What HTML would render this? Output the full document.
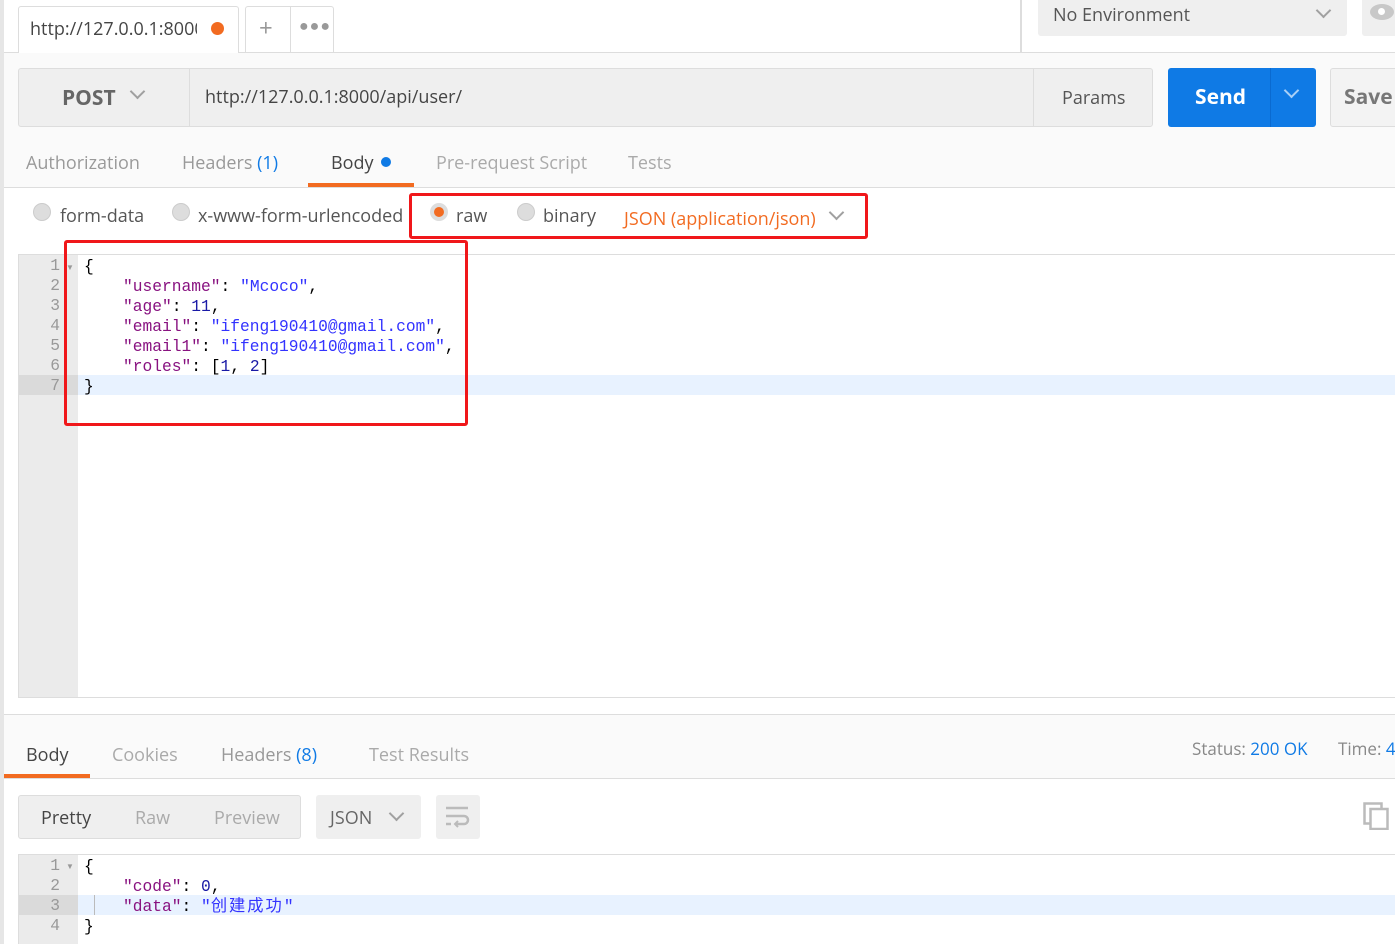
<!DOCTYPE html>
<html><head><meta charset="utf-8"><style>
*{margin:0;padding:0;box-sizing:border-box}
body{width:1395px;height:944px;overflow:hidden;background:#fff;font-family:"Open Sans","Liberation Sans",sans-serif;color:#505050;position:relative}
.a{position:absolute}
.t{font-size:18px;white-space:nowrap}
.mono{font-family:"Liberation Mono","Noto Sans CJK SC",monospace;font-size:16.25px;white-space:pre;line-height:20px}
.k{color:#881280}.s{color:#3333ff}.n{color:#1a1aa6}
.chev{display:inline-block;width:11px;height:11px;border-right:2px solid #a0a0a0;border-bottom:2px solid #a0a0a0;transform:rotate(45deg)}
.radio{width:18px;height:18px;border-radius:50%;background:#ddd;border:1px solid #ccc}
</style></head><body>
<div class="a" style="left:0;top:0;width:4px;height:944px;background:#e6e6e6"></div>
<div class="a" style="left:4px;top:52px;width:1391px;height:1px;background:#ddd"></div>
<div class="a" style="left:18px;top:6px;width:221px;height:47px;background:#fff;border:1px solid #ddd;border-bottom:none;border-radius:3px 3px 0 0"></div>
<div class="a t" style="left:30px;top:17px;width:167px;overflow:hidden;color:#444">http://127.0.0.1:8000</div>
<div class="a" style="left:211px;top:22px;width:13px;height:13px;border-radius:50%;background:#f26b21"></div>
<div class="a" style="left:245px;top:6px;width:89px;height:46px;border:1px solid #ddd;border-bottom:none;border-radius:3px 3px 0 0"></div>
<div class="a" style="left:290px;top:6px;width:1px;height:46px;background:#ddd"></div>
<div class="a" style="left:259px;top:11px;font-size:24px;color:#999">+</div>
<div class="a" style="left:299px;top:14px;font-size:16px;color:#999;letter-spacing:1px">●●●</div>
<div class="a" style="left:1020px;top:0;width:2px;height:52px;background:#ddd"></div>
<div class="a" style="left:1038px;top:0;width:309px;height:36px;background:#efefef;border-radius:0 0 3px 3px"></div>
<div class="a t" style="left:1053px;top:3px;color:#555">No Environment</div>
<div class="a chev" style="left:1318px;top:5px"></div>
<div class="a" style="left:1362px;top:0;width:40px;height:36px;background:#efefef;border-radius:0 0 3px 3px"></div>
<div class="a" style="left:1370px;top:4px;width:24px;height:16px;border-radius:50%;background:#c8c8c8"></div>
<div class="a" style="left:1376px;top:6px;width:11px;height:11px;border-radius:50%;background:#fff;border:2px solid #c8c8c8"></div>
<div class="a" style="left:4px;top:53px;width:1391px;height:135px;background:#fafafa"></div>
<div class="a" style="left:4px;top:187px;width:1391px;height:1px;background:#ddd"></div>
<div class="a" style="left:18px;top:68px;width:1135px;height:59px;background:#efefef;border:1px solid #ddd;border-radius:3px"></div>
<div class="a" style="left:189px;top:68px;width:1px;height:59px;background:#ddd"></div>
<div class="a" style="left:1033px;top:68px;width:1px;height:59px;background:#ddd"></div>
<div class="a" style="left:62px;top:84px;font-size:21px;font-weight:bold;color:#666">POST</div>
<div class="a chev" style="left:132px;top:86px"></div>
<div class="a t" style="left:205px;top:85px;color:#444">http://127.0.0.1:8000/api/user/</div>
<div class="a t" style="left:1062px;top:86px;color:#555">Params</div>
<div class="a" style="left:1168px;top:68px;width:148px;height:59px;background:#0f7ae5;border-radius:3px"></div>
<div class="a" style="left:1270px;top:68px;width:1px;height:59px;background:#0a6ad0"></div>
<div class="a" style="left:1195px;top:83px;font-size:21px;font-weight:bold;color:#fff">Send</div>
<div class="a" style="left:1286px;top:85px;width:11px;height:11px;border-right:2px solid #a9d0f7;border-bottom:2px solid #a9d0f7;transform:rotate(45deg)"></div>
<div class="a" style="left:1330px;top:68px;width:80px;height:59px;background:#f3f3f3;border:1px solid #ddd;border-radius:3px"></div>
<div class="a" style="left:1344px;top:83px;font-size:21px;font-weight:bold;color:#777">Save</div>
<div class="a t" style="left:26px;top:151px;color:#999">Authorization</div>
<div class="a t" style="left:182px;top:151px;color:#999">Headers <span style="color:#0f7ae5">(1)</span></div>
<div class="a t" style="left:331px;top:151px;color:#444">Body</div>
<div class="a" style="left:381px;top:157px;width:10px;height:10px;border-radius:50%;background:#0f7ae5"></div>
<div class="a" style="left:308px;top:183px;width:106px;height:4px;background:#f26b21"></div>
<div class="a t" style="left:436px;top:151px;color:#aaa">Pre-request Script</div>
<div class="a t" style="left:628px;top:151px;color:#aaa">Tests</div>
<div class="a radio" style="left:33px;top:203px"></div>
<div class="a t" style="left:60px;top:204px;color:#555">form-data</div>
<div class="a radio" style="left:172px;top:203px"></div>
<div class="a t" style="left:198px;top:204px;color:#555">x-www-form-urlencoded</div>
<div class="a radio" style="left:430px;top:203px;background:#f26b21;border:4px solid #ddd"></div>
<div class="a t" style="left:456px;top:204px;color:#555">raw</div>
<div class="a radio" style="left:517px;top:203px"></div>
<div class="a t" style="left:543px;top:204px;color:#555">binary</div>
<div class="a t" style="left:624px;top:207px;color:#f26b21">JSON (application/json)</div>
<div class="a chev" style="left:831px;top:207px"></div>
<div class="a" style="left:409px;top:193px;width:459px;height:46px;border:3px solid #f0171a;border-radius:3px"></div>
<div class="a" style="left:18px;top:254px;width:1377px;height:444px;border:1px solid #ddd;border-right:none"></div>
<div class="a" style="left:19px;top:255px;width:59px;height:442px;background:#ebebeb"></div>
<div class="a" style="left:19px;top:375px;width:59px;height:20px;background:#dadada"></div>
<div class="a" style="left:78px;top:375px;width:1317px;height:20px;background:#e8f2ff"></div>
<div class="a mono" style="left:40px;top:256px;color:#999;text-align:right;width:20px">1
2
3
4
5
6
7</div>
<div class="a" style="left:66px;top:262px;font-size:8px;color:#999">▼</div>
<div class="a mono" style="left:84px;top:257px;color:#000">{
    <span class="k">"username"</span>: <span class="s">"Mcoco"</span>,
    <span class="k">"age"</span>: <span class="n">11</span>,
    <span class="k">"email"</span>: <span class="s">"ifeng190410@gmail.com"</span>,
    <span class="k">"email1"</span>: <span class="s">"ifeng190410@gmail.com"</span>,
    <span class="k">"roles"</span>: [<span class="n">1</span>, <span class="n">2</span>]
}</div>
<div class="a" style="left:64px;top:240px;width:404px;height:186px;border:3px solid #f0171a;border-radius:3px"></div>
<div class="a" style="left:4px;top:714px;width:1391px;height:1px;background:#ddd"></div>
<div class="a" style="left:4px;top:715px;width:1391px;height:64px;background:#fafafa"></div>
<div class="a" style="left:4px;top:778px;width:1391px;height:1px;background:#ddd"></div>
<div class="a t" style="left:26px;top:743px;color:#444">Body</div>
<div class="a" style="left:4px;top:774px;width:86px;height:4px;background:#f26b21"></div>
<div class="a t" style="left:112px;top:743px;color:#aaa">Cookies</div>
<div class="a t" style="left:221px;top:743px;color:#999">Headers <span style="color:#0f7ae5">(8)</span></div>
<div class="a t" style="left:369px;top:743px;color:#aaa">Test Results</div>
<div class="a" style="left:1192px;top:737px;font-size:17px;color:#888;white-space:nowrap">Status: <span style="color:#0f7ae5">200 OK</span></div>
<div class="a" style="left:1338px;top:737px;font-size:17px;color:#888;white-space:nowrap">Time: <span style="color:#0f7ae5">4</span></div>
<div class="a" style="left:18px;top:795px;width:283px;height:44px;background:#efefef;border:1px solid #ddd;border-radius:3px"></div>
<div class="a t" style="left:41px;top:806px;color:#444">Pretty</div>
<div class="a t" style="left:135px;top:806px;color:#aaa">Raw</div>
<div class="a t" style="left:214px;top:806px;color:#aaa">Preview</div>
<div class="a" style="left:316px;top:795px;width:105px;height:44px;background:#efefef;border-radius:3px"></div>
<div class="a t" style="left:330px;top:806px;color:#666">JSON</div>
<div class="a chev" style="left:391px;top:808px"></div>
<div class="a" style="left:436px;top:795px;width:44px;height:44px;background:#efefef;border-radius:3px"></div>
<svg class="a" style="left:444px;top:804px" width="28" height="26" viewBox="0 0 28 26"><path d="M2 4H24M2 12H20a4 4 0 0 1 0 8H12M2 20H7" stroke="#bbb" stroke-width="2.5" fill="none"/><path d="M14 17l-3 3 3 3" stroke="#bbb" stroke-width="2" fill="none"/></svg>
<svg class="a" style="left:1363px;top:802px" width="28" height="28" viewBox="0 0 28 28"><rect x="1.5" y="1.5" width="17" height="20" fill="none" stroke="#bbb" stroke-width="2.5"/><rect x="7.5" y="7" width="17" height="20" fill="#fff" stroke="#bbb" stroke-width="2.5"/></svg>
<div class="a" style="left:18px;top:854px;width:1377px;height:90px;border-top:1px solid #ddd;border-left:1px solid #ddd"></div>
<div class="a" style="left:19px;top:855px;width:59px;height:89px;background:#ebebeb"></div>
<div class="a" style="left:19px;top:895px;width:59px;height:20px;background:#dadada"></div>
<div class="a" style="left:78px;top:895px;width:1317px;height:20px;background:#e8f2ff"></div>
<div class="a" style="left:94px;top:895px;width:1px;height:20px;background:#bbb"></div>
<div class="a mono" style="left:40px;top:856px;color:#999;text-align:right;width:20px">1
2
3
4</div>
<div class="a" style="left:66px;top:861px;font-size:8px;color:#999">▼</div>
<div class="a mono" style="left:84px;top:857px;color:#000">{
    <span class="k">"code"</span>: <span class="n">0</span>,
    <span class="k">"data"</span>: <span class="s">"<span style="letter-spacing:2px">创建成功</span>"</span>
}</div>
</body></html>
